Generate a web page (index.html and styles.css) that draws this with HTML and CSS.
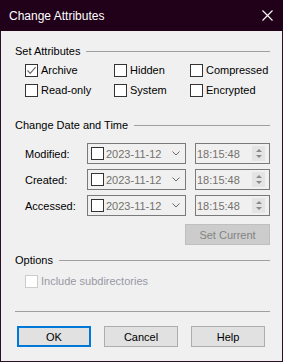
FILE: index.html
```html
<!DOCTYPE html>
<html lang="en">
<head>
    <meta charset="UTF-8">
    <meta name="viewport" content="width=device-width, initial-scale=1.0">
    <title>Change Attributes</title>
    <link rel="stylesheet" href="styles.css">
</head>
<body>
    <div class="window">
        <div class="titlebar">
            <span class="title">Change Attributes</span>
            <svg class="close" width="11" height="11" viewBox="0 0 11 11">
                <path d="M0.5 0.5 L10.5 10.5 M10.5 0.5 L0.5 10.5" stroke="#ffffff" stroke-width="1.1" fill="none"/>
            </svg>
        </div>

        <div class="client">
            <!-- Attributes -->
            <div class="group-head"><span>Set Attributes</span><span class="rule"></span></div>
            <div class="attr-grid">
                <label class="check"><span class="box"><svg width="11" height="11" viewBox="0 0 11 11"><path d="M1.5 5.5 L4.2 8.3 L9.6 2.2" stroke="#6b6b6b" stroke-width="1.2" fill="none"/></svg></span>Archive</label>
                <label class="check"><span class="box"></span>Hidden</label>
                <label class="check"><span class="box"></span>Compressed</label>
                <label class="check"><span class="box"></span>Read-only</label>
                <label class="check"><span class="box"></span>System</label>
                <label class="check"><span class="box"></span>Encrypted</label>
            </div>

            <!-- Date and time -->
            <div class="group-head head-date"><span>Change Date and Time</span><span class="rule"></span></div>
            <div class="date-rows">
                <div class="date-row">
                    <span class="row-label">Modified:</span>
                    <div class="datepicker">
                        <span class="box small"></span>
                        <span class="value">2023-11-12</span>
                        <svg class="chevron" width="8" height="5" viewBox="0 0 8 5"><path d="M0.5 0.5 L4 4 L7.5 0.5" stroke="#6a6a6a" fill="none"/></svg>
                    </div>
                    <div class="timepicker">
                        <span class="value">18:15:48</span>
                        <span class="spin"><span class="up"></span><span class="down"></span></span>
                    </div>
                </div>
                <div class="date-row">
                    <span class="row-label">Created:</span>
                    <div class="datepicker">
                        <span class="box small"></span>
                        <span class="value">2023-11-12</span>
                        <svg class="chevron" width="8" height="5" viewBox="0 0 8 5"><path d="M0.5 0.5 L4 4 L7.5 0.5" stroke="#6a6a6a" fill="none"/></svg>
                    </div>
                    <div class="timepicker">
                        <span class="value">18:15:48</span>
                        <span class="spin"><span class="up"></span><span class="down"></span></span>
                    </div>
                </div>
                <div class="date-row">
                    <span class="row-label">Accessed:</span>
                    <div class="datepicker">
                        <span class="box small"></span>
                        <span class="value">2023-11-12</span>
                        <svg class="chevron" width="8" height="5" viewBox="0 0 8 5"><path d="M0.5 0.5 L4 4 L7.5 0.5" stroke="#6a6a6a" fill="none"/></svg>
                    </div>
                    <div class="timepicker">
                        <span class="value">18:15:48</span>
                        <span class="spin"><span class="up"></span><span class="down"></span></span>
                    </div>
                </div>
            </div>
            <div class="set-current">
                <button class="btn btn-disabled">Set Current</button>
            </div>

            <!-- Options -->
            <div class="group-head head-options"><span>Options</span><span class="rule"></span></div>
            <label class="check disabled"><span class="box"></span>Include subdirectories</label>

            <div class="separator"></div>

            <div class="actions">
                <button class="btn btn-default">OK</button>
                <button class="btn">Cancel</button>
                <button class="btn">Help</button>
            </div>
        </div>
    </div>
</body>
</html>
```

FILE: styles.css
```css
body {
    margin: 0;
    padding: 0;
    font-family: "Liberation Sans", Arial, sans-serif;
    font-size: 11px;
    color: #000000;
    background-color: #f0f0f0;
}

.window {
    width: 283px;
    height: 362px;
    box-sizing: border-box;
    border: 1px solid #2a1024;
    border-top: none;
    display: flex;
    flex-direction: column;
    background-color: #f0f0f0;
}

.titlebar {
    height: 31px;
    margin: 0 -1px;
    background-color: #21001a;
    display: flex;
    align-items: center;
    justify-content: space-between;
    padding: 0 10px 0 9px;
    flex-shrink: 0;
}

.title {
    color: #ffffff;
    font-size: 12px;
    margin-top: 1px;
}

.close {
    display: block;
}

.client {
    flex: 1;
    padding: 13px 12px 0 14px;
    display: flex;
    flex-direction: column;
}

.group-head {
    display: flex;
    align-items: center;
    height: 15px;
    line-height: 15px;
}

.group-head .rule {
    flex: 1;
    height: 1px;
    margin-left: 6px;
    background-color: #a0a0a0;
}

.head-date {
    margin-top: 18px;
}

.head-options {
    margin-top: 8px;
}

.attr-grid {
    margin-top: 1px;
    padding-left: 10px;
    display: grid;
    grid-template-columns: 89px 76px 1fr;
    grid-auto-rows: 20px;
}

.check {
    display: flex;
    align-items: center;
    height: 20px;
}

.check.disabled {
    margin-top: 3px;
    padding-left: 10px;
    color: #9898a4;
}

.box {
    width: 13px;
    height: 13px;
    box-sizing: border-box;
    border: 1px solid #333333;
    background-color: #ffffff;
    margin-right: 3px;
    display: flex;
    align-items: center;
    justify-content: center;
    flex-shrink: 0;
}

.check.disabled .box {
    border-color: #cccccc;
}

.date-rows {
    margin-top: 10px;
    padding-left: 10px;
    display: flex;
    flex-direction: column;
    gap: 5px;
}

.date-row {
    display: flex;
    align-items: center;
    height: 21px;
}

.row-label {
    width: 62px;
}

.datepicker, .timepicker {
    height: 21px;
    box-sizing: border-box;
    border: 1px solid #7a7a7a;
    background-color: #f0f0f0;
    display: flex;
    align-items: center;
    color: #74716c;
}

.datepicker {
    width: 99px;
    padding-left: 3px;
}

.datepicker .box {
    margin-right: 2px;
}

.datepicker .value {
    flex: 1;
}

.chevron {
    margin-right: 5px;
}

.timepicker {
    width: 75px;
    margin-left: 9px;
    padding-left: 1px;
    padding-right: 4px;
}

.timepicker .value {
    flex: 1;
}

.spin {
    width: 13px;
    height: 15px;
    background-color: #e4e4e4;
    display: flex;
    flex-direction: column;
    align-items: center;
    justify-content: center;
    gap: 3px;
}

.spin .up {
    width: 0;
    height: 0;
    border-left: 3px solid transparent;
    border-right: 3px solid transparent;
    border-bottom: 3px solid #8a8a8a;
}

.spin .down {
    width: 0;
    height: 0;
    border-left: 3px solid transparent;
    border-right: 3px solid transparent;
    border-top: 3px solid #8a8a8a;
}

.set-current {
    margin-top: 8px;
    display: flex;
    justify-content: flex-end;
}

.btn {
    width: 74px;
    height: 21px;
    box-sizing: border-box;
    border: 1px solid #adadad;
    background-color: #e1e1e1;
    font-family: "Liberation Sans", Arial, sans-serif;
    font-size: 11px;
    color: #000000;
    padding: 0;
}

.btn-disabled {
    width: 85px;
    border-color: #bfbfbf;
    background-color: #cccccc;
    color: #838383;
}

.btn-default {
    border: 2px solid #0078d7;
}

.separator {
    margin-top: 20px;
    height: 1px;
    background-color: #a0a0a0;
}

.actions {
    margin-top: 14px;
    padding-left: 2px;
    display: flex;
    gap: 13px;
}
```
